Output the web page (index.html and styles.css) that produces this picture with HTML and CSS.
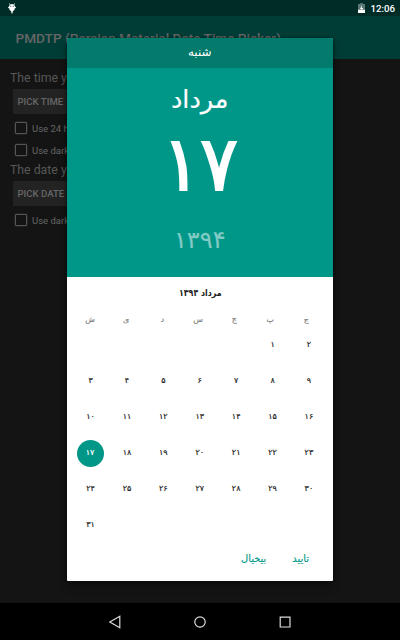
FILE: index.html
```
<!DOCTYPE html>
<html lang="fa">
<head>
<meta charset="utf-8">
<title>PMDTP</title>
<link rel="stylesheet" href="styles.css">
</head>
<body>
<div class="screen">
  <header class="status">
    <svg class="debug" viewBox="0 0 8 11"><path d="M1.500.3l.9 1.100a3.200 3.200 0 0 1 3.200 0L6.500.3l.5.4-.9 1.200q.9.8.9 1.700L8 4.500l-.3.8-.8-.3Q6.800 7.700 4.800 8.300L4.500 10.500h-1L3.200 8.300Q1.200 7.700 1.100 5l-.8.300L0 4.500l1-.9q0-.9.9-1.700L1 .7z"/><path class="eye" d="M2.300 2.800h.9v.9h-.9zM4.800 2.800h.9v.9h-.9z"/></svg>
    <div class="status-right">
      <svg class="battery" viewBox="0 0 7 10"><path class="dim" d="M2.200 0h2.600v1H7v5H0V1h2.200z"/><path d="M0 6.500h7V10H0z"/><path d="M4 2L2 6h1.500L3 8.500 5.200 5H3.700z"/></svg>
      <span>12:06</span>
    </div>
  </header>
  <div class="appbar">PMDTP (Persian Material Date Time Picker)</div>
  <main class="content">
    <p class="label">The time you picked</p>
    <div class="button">PICK TIME</div>
    <div class="check first"><i></i><span>Use 24 hours mode</span></div>
    <div class="check"><i></i><span>Use dark theme</span></div>
    <p class="label second">The date you picked</p>
    <div class="button">PICK DATE</div>
    <div class="check last"><i></i><span>Use dark theme</span></div>
  </main>
  <nav class="navbar">
    <svg viewBox="0 0 14 14"><path d="M11.800 1.300v11.400L1.800 7z"/></svg>
    <svg viewBox="0 0 14 14"><circle cx="7" cy="7" r="5.200"/></svg>
    <svg viewBox="0 0 14 14"><path d="M2.200 2.200h9.800v9.800H2.200z"/></svg>
  </nav>
</div>
<section class="dialog">
  <div class="weekday"><span>شنبه</span></div>
  <div class="hero">
    <div class="month"><span>مرداد</span></div>
    <div class="day"><span>۱۷</span></div>
    <div class="year"><span>۱۳۹۴</span></div>
  </div>
  <div class="title" dir="rtl">مرداد ۱۳۹۴</div>
  <div class="grid heads"><span>ش</span><span>ی</span><span>د</span><span>س</span><span>چ</span><span>پ</span><span>ج</span></div>
  <div class="grid days">
    <span></span><span></span><span></span><span></span><span></span><span>۱</span><span>۲</span>
    <span>۳</span><span>۴</span><span>۵</span><span>۶</span><span>۷</span><span>۸</span><span>۹</span>
    <span>۱۰</span><span>۱۱</span><span>۱۲</span><span>۱۳</span><span>۱۴</span><span>۱۵</span><span>۱۶</span>
    <span class="selected">۱۷</span><span>۱۸</span><span>۱۹</span><span>۲۰</span><span>۲۱</span><span>۲۲</span><span>۲۳</span>
    <span>۲۴</span><span>۲۵</span><span>۲۶</span><span>۲۷</span><span>۲۸</span><span>۲۹</span><span>۳۰</span>
    <span>۳۱</span>
  </div>
  <div class="actions"><span>بیخیال</span><span>تایید</span></div>
</section>
</body>
</html>
```
FILE: styles.css
```
* { box-sizing: border-box; }
body { margin: 0; width: 400px; height: 640px; overflow: hidden; background: #141414; font-family: Roboto, sans-serif; }
.screen { height: 640px; display: flex; flex-direction: column; }
.status { height: 16px; flex: none; background: #002c28; display: flex; justify-content: space-between; align-items: center; padding: 0 5px 0 8px; color: #fff; font-size: 9.7px; font-weight: 500; line-height: 16px; }
.status svg { fill: #fff; display: block; }
.debug { width: 8px; height: 11px; }
.status .eye { fill: #002c28; }
.status-right { display: flex; align-items: center; gap: 5px; padding-top: 1px; }
.battery { width: 7px; height: 10px; margin-top: -2px; }
.status .dim { fill: #5a7774; }
.appbar { height: 43px; flex: none; background: #003d37; color: #666; font-size: 13.600px; font-weight: 500; line-height: 45px; padding-left: 15.500px; white-space: nowrap; }
.content { flex: 1; padding: 11px 10px; color: #575757; white-space: nowrap; overflow: hidden; }
.label { margin: 0; height: 16px; line-height: 16px; font-size: 12.300px; }
.button { margin: 3px 0 0 3px; width: 90px; height: 25px; line-height: 25px; padding-left: 4.500px; background: #232323; border-radius: 1px; font-size: 9.600px; font-weight: 500; color: #666; }
.check { display: flex; align-items: center; height: 22px; gap: 5px; font-size: 9.500px; padding-left: 5px; color: #666; }
.check.first { margin-top: 3px; }
.check.last { margin-top: 3px; }
.check i { width: 12px; height: 12px; border: 1.300px solid #555; border-radius: 1px; box-shadow: 0 0 0 .3px #444; }
.label.second { margin-top: 1px; }
.navbar { height: 37px; flex: none; background: #000; display: flex; justify-content: center; gap: 71px; align-items: center; }
.navbar svg { width: 14px; height: 14px; fill: none; stroke: #ddd; stroke-width: 1.200; }
.dialog { position: absolute; left: 66.500px; top: 37.500px; width: 266.500px; height: 543.500px; background: #fff; border-radius: 1px; overflow: hidden; box-shadow: 0 5px 8px rgba(0,0,0,.4), 0 0 3px rgba(0,0,0,.5); font-family: "DejaVu Sans", sans-serif; }
.weekday { height: 30px; background: #027a6c; color: #fff; text-align: center; font-size: 12px; line-height: 28px; }
.month { -webkit-text-stroke: .2px #fff; }
.hero { height: 209.500px; background: #009788; color: #fff; text-align: center; }
.hero span { display: inline-block; }
.month { height: 60px; line-height: 62px; font-size: 25.500px; }
.day { height: 76px; line-height: 72px; font-size: 73px; -webkit-text-stroke: 2px #fff; }
.day span { letter-spacing: -4px; transform: scale(.96, 1.04); }
.year { height: 73px; line-height: 73px; font-size: 24px; color: #80cbc4; -webkit-text-stroke: .2px #80cbc4; }
.title { height: 32px; line-height: 32px; text-align: center; font-size: 9.500px; font-weight: 700; color: #222; transform: scaleX(.83); }
.grid { display: grid; grid-template-columns: repeat(7, 36.400px); justify-content: center; justify-items: center; align-items: center; text-align: center; }
.heads { height: 17px; padding-top: 3px; grid-template-columns: repeat(7, 36px); padding-right: 3px; font-size: 8px; color: #777; -webkit-text-stroke: .1px #777; }
.days { grid-auto-rows: 36px; font-size: 8px; color: #222; -webkit-text-stroke: .2px currentColor; }
.selected { width: 27px; height: 27px; line-height: 25px; border-radius: 50%; background: #009788; color: #fff; position: relative; top: 1px; left: -.5px; }
.actions { display: flex; justify-content: flex-end; gap: 26px; padding-right: 24px; height: 32px; line-height: 33px; font-size: 9.900px; color: #009788; -webkit-text-stroke: .15px #009788; }
```
